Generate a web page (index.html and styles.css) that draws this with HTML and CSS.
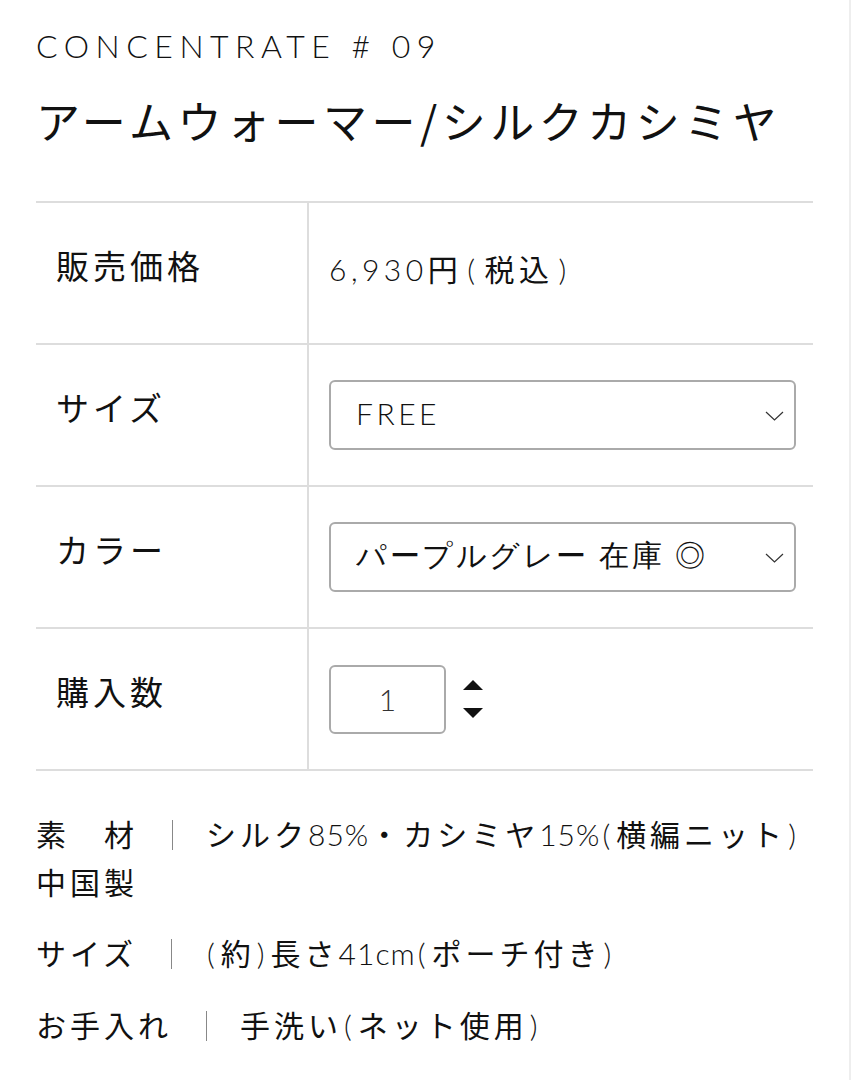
FILE: index.html
```html
<!DOCTYPE html>
<html lang="ja">
<head>
    <meta charset="UTF-8">
    <meta name="viewport" content="width=device-width, initial-scale=1.0">
    <title>アームウォーマー/シルクカシミヤ</title>
    <link rel="stylesheet" href="styles.css">
</head>
<body>
    <div class="product">
        <p class="brand">CONCENTRATE # 09</p>
        <h1 class="name">アームウォーマー/シルクカシミヤ</h1>

        <!-- 購入テーブル -->
        <table class="spec">
            <tr>
                <th>販売価格</th>
                <td><span class="num">6,930</span>円<span class="paren">(</span>税込<span class="paren">)</span></td>
            </tr>
            <tr>
                <th>サイズ</th>
                <td>
                    <div class="select-wrap">
                        <select class="select num">
                            <option>FREE</option>
                        </select>
                        <svg class="chevron" width="19" height="10" viewBox="0 0 19 10"><path d="M1 1 L9.5 9 L18 1" fill="none" stroke="#333" stroke-width="1.2"/></svg>
                    </div>
                </td>
            </tr>
            <tr>
                <th>カラー</th>
                <td>
                    <div class="select-wrap">
                        <select class="select">
                            <option>パープルグレー 在庫 ◎</option>
                        </select>
                        <svg class="chevron" width="19" height="10" viewBox="0 0 19 10"><path d="M1 1 L9.5 9 L18 1" fill="none" stroke="#333" stroke-width="1.2"/></svg>
                    </div>
                </td>
            </tr>
            <tr>
                <th>購入数</th>
                <td>
                    <div class="qty">
                        <input type="text" class="qty-input num" value="1">
                        <div class="qty-arrows">
                            <svg width="22" height="12" viewBox="0 0 22 12"><path d="M11 1 L21 11 H1 Z" fill="#111"/></svg>
                            <svg width="22" height="12" viewBox="0 0 22 12"><path d="M1 1 H21 L11 11 Z" fill="#111"/></svg>
                        </div>
                    </div>
                </td>
            </tr>
        </table>

        <!-- 商品詳細 -->
        <div class="notes">
            <p class="keep">素　材<span class="sep"></span>シルク<span class="num">85%</span>・カシミヤ<span class="num">15%</span><span class="paren">(</span>横編ニット<span class="paren">)</span><br>中国製</p>
            <p>サイズ<span class="sep"></span><span class="paren">(</span>約<span class="paren">)</span>長さ<span class="num">41cm</span><span class="paren">(</span>ポーチ付き<span class="paren">)</span></p>
            <p>お手入れ<span class="sep"></span>手洗い<span class="paren">(</span>ネット使用<span class="paren">)</span></p>
        </div>
    </div>
</body>
</html>
```

FILE: styles.css
```css
body {
    margin: 0;
    background-color: #fff;
    color: #111;
    font-family: "Noto Sans CJK JP", sans-serif;
}
.product {
    padding: 26px 36px 0;
    border-right: 2px solid #eee;
    min-height: 1080px;
    box-sizing: border-box;
}
.num {
    font-family: Lato, "Noto Sans CJK JP", sans-serif;
    font-weight: 300;
}
.paren {
    display: inline-block;
    margin: 0 5px;
    font-family: Lato, sans-serif;
    font-weight: 300;
}
.brand {
    margin: 0;
    font-family: Lato, sans-serif;
    font-weight: 300;
    font-size: 32px;
    letter-spacing: 6.5px;
    line-height: 40px;
}
.name {
    margin: 24px 0 0;
    font-size: 44px;
    font-weight: 400;
    line-height: 60px;
    letter-spacing: 4.5px;
}
.spec {
    width: 100%;
    margin-top: 51px;
    border-collapse: collapse;
    table-layout: fixed;
}
.spec th, .spec td {
    border-top: 2px solid #ddd;
    border-bottom: 2px solid #ddd;
    height: 142px;
    box-sizing: border-box;
    padding: 0 0 10px 20px;
    font-size: 30px;
    font-weight: 400;
    text-align: left;
}
.spec th {
    width: 272px;
    border-right: 2px solid #ddd;
    padding-bottom: 16px;
    font-size: 33px;
    letter-spacing: 4px;
}
.spec td {
    letter-spacing: 4.5px;
}
.select-wrap {
    position: relative;
    width: 467px;
    margin-top: 10px;
}
.select {
    width: 100%;
    height: 70px;
    padding: 0 0 4px 25px;
    border: 2px solid #aaa;
    border-radius: 6px;
    background-color: #fff;
    color: #111;
    font-size: 30px;
    letter-spacing: 2.5px;
    -webkit-appearance: none;
    appearance: none;
}
.select.num {
    letter-spacing: 3.5px;
}
.chevron {
    position: absolute;
    right: 12px;
    top: 31px;
}
.qty {
    display: flex;
    align-items: center;
    gap: 16px;
    margin-top: 10px;
}
.qty-input {
    width: 117px;
    height: 69px;
    box-sizing: border-box;
    border: 2px solid #aaa;
    border-radius: 6px;
    text-align: center;
    font-size: 30px;
    color: #333;
}
.qty-arrows {
    display: flex;
    flex-direction: column;
    gap: 16px;
}
.qty-arrows svg {
    display: block;
}
.notes {
    padding-top: 39px;
}
.notes p {
    margin: 0 0 24px;
    font-size: 30px;
    line-height: 47px;
    letter-spacing: 4px;
}
.notes .keep {
    white-space: nowrap;
}
.notes .num {
    letter-spacing: 1px;
}
.notes .paren {
    margin: 0 2px;
}
.sep {
    display: inline-block;
    width: 1px;
    height: 30px;
    margin: 0 33px 0 34px;
    background-color: #888;
    vertical-align: -4px;
}
```
